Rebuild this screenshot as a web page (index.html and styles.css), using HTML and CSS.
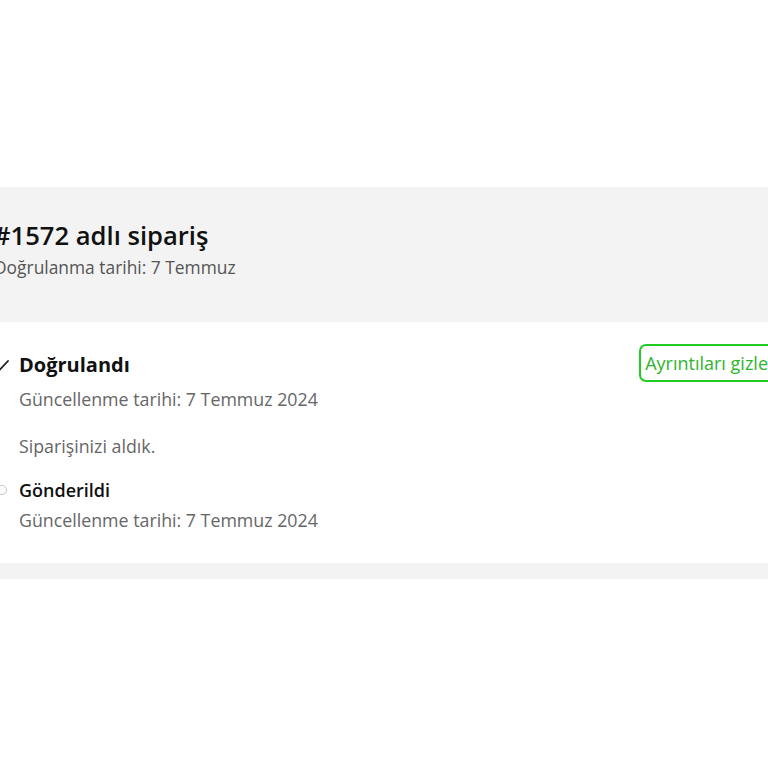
FILE: index.html
```html
<!DOCTYPE html>
<html lang="tr">
<head>
<meta charset="utf-8">
<link rel="stylesheet" href="styles.css">
</head>
<body>
<div class="page">
  <section class="header">
    <h1 class="title">#1572 adlı sipariş</h1>
    <p class="subtitle">Doğrulanma tarihi: 7 Temmuz</p>
  </section>
  <section class="card">
    <div class="step">
      <div class="icon">
        <svg width="16" height="16" viewBox="0 0 16 16"><path d="M2 8.5l3.5 3.5L14 3" fill="none" stroke="#1a1a1a" stroke-width="1.8" stroke-linecap="round" stroke-linejoin="round"/></svg>
      </div>
      <div class="step-body">
        <div class="step-head">
          <h2 class="step-title current">Doğrulandı</h2>
          <button class="toggle">Ayrıntıları gizle</button>
        </div>
        <p class="meta">Güncellenme tarihi: 7 Temmuz 2024</p>
        <p class="note">Siparişinizi aldık.</p>
      </div>
    </div>
    <div class="step">
      <div class="icon">
        <span class="dot"></span>
      </div>
      <div class="step-body">
        <h2 class="step-title">Gönderildi</h2>
        <p class="meta">Güncellenme tarihi: 7 Temmuz 2024</p>
      </div>
    </div>
  </section>
  <div class="strip"></div>
</div>
</body>
</html>
```
FILE: styles.css
```css
html, body {
  margin: 0;
  padding: 0;
  background: #ffffff;
  overflow: hidden;
}
body {
  font-family: "Open Sans", "Noto Sans", sans-serif;
  color: #1a1a1a;
}
.page {
  margin-top: 187px;
  margin-left: -30px;
  width: 900px;
}
.header {
  background: #f3f3f3;
  height: 135px;
  box-sizing: border-box;
  padding: 31px 0 0 24px;
}
.title {
  margin: 0;
  font-size: 25.6px;
  font-weight: 600;
  line-height: 36px;
  color: #111;
}
.subtitle {
  margin: 0;
  font-size: 17.4px;
  line-height: 26px;
  color: #555;
}
.card {
  background: #fff;
  padding: 30px 0 31px 24px;
}
.step {
  display: flex;
  gap: 9px;
}
.step + .step {
  margin-top: 19px;
}
.icon {
  width: 16px;
  flex: none;
  display: flex;
  justify-content: center;
  padding-top: 6px;
}
.dot {
  width: 8px;
  height: 8px;
  border-radius: 50%;
  border: 1.5px solid #c4c4c4;
  margin-top: 2px;
}
.step-body {
  flex: 1;
}
.step-head {
  display: flex;
  justify-content: space-between;
  align-items: flex-start;
  padding-right: 94px;
}
.step-title {
  margin: 0;
  font-size: 18px;
  font-weight: 600;
  line-height: 26px;
  color: #111;
}
.step-title.current {
  font-size: 20px;
  font-weight: 700;
}
.meta {
  margin: 5px 0 0;
  font-size: 17.8px;
  line-height: 24px;
  color: #666;
}
.note {
  margin: 23px 0 0;
  font-size: 17.8px;
  line-height: 24px;
  color: #666;
}
.toggle {
  font-family: inherit;
  font-size: 18px;
  color: #2db52d;
  background: #fff;
  border: 2px solid #22cc22;
  border-radius: 7px;
  padding: 5px 6px 5px 4px;
  margin-top: -8px;
  line-height: 24px;
  white-space: nowrap;
}
.strip {
  background: #f3f3f3;
  height: 16px;
}
```
